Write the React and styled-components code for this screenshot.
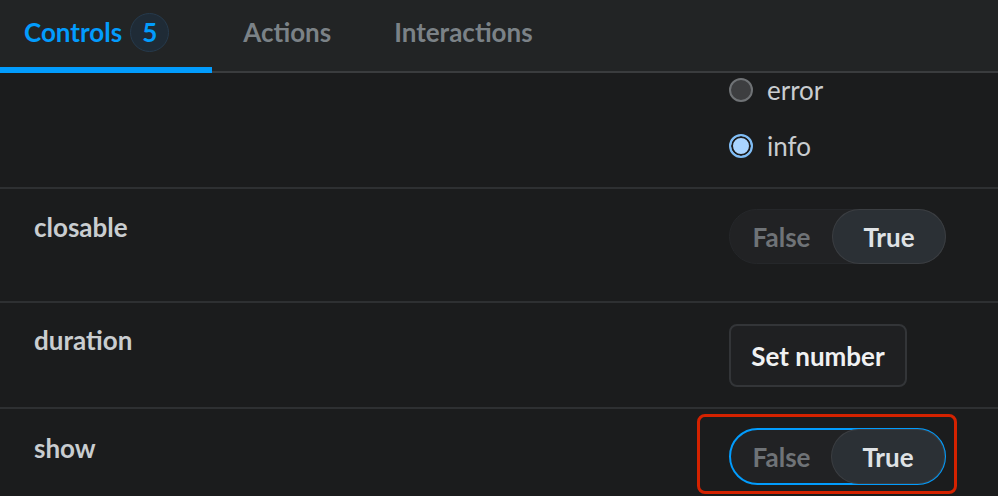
import React from "react";
import styled, { createGlobalStyle } from "styled-components";

const Global = createGlobalStyle`
  html, body { margin: 0; padding: 0; background: #1b1c1d; overflow: hidden; }
  body { font-family: Lato, "Noto Sans", sans-serif; -webkit-font-smoothing: antialiased; }
`;

const FS = "26px";

const Panel = styled.div`
  width: 998px;
  height: 496px;
  display: flex;
  flex-direction: column;
  background: #1b1c1d;
  overflow: hidden;
`;

const TabBar = styled.div`
  height: 73px;
  flex: none;
  display: flex;
  align-items: stretch;
  background: #222425;
  box-shadow: inset 0 -2px 0 #3a3c3e;
`;

const Tab = styled.div`
  display: flex;
  align-items: center;
  gap: 8px;
  padding: 0 ${(p) => p.$pr}px 9px ${(p) => p.$pl}px;
  font-size: ${FS};
  font-weight: 700;
  color: ${(p) => (p.$active ? "#029cfd" : "#7b8287")};
  box-shadow: ${(p) => (p.$active ? "inset 0 -6px 0 #029cfd" : "none")};
`;

const Badge = styled.span`
  width: 37px;
  height: 37px;
  border-radius: 50%;
  display: flex;
  align-items: center;
  justify-content: center;
  background: #1f2b36;
  border: 1px solid #263a4c;
  color: #029cfd;
  font-size: ${FS};
  font-weight: 700;
`;

const Rows = styled.div`
  display: flex;
  flex-direction: column;
`;

const Row = styled.div`
  display: grid;
  grid-template-columns: 695px 1fr;
  height: ${(p) => p.$h}px;
  box-sizing: border-box;
  border-top: ${(p) => (p.$first ? "none" : "2px solid #2e3032")};
  padding: ${(p) => p.$pt}px 0 0 34px;
`;

const Label = styled.div`
  font-size: ${FS};
  font-weight: 700;
  color: #c9cdd0;
  line-height: 30px;
  padding-top: ${(p) => p.$pt}px;
`;

const Control = styled.div`
  display: flex;
  flex-direction: column;
  align-items: flex-start;
  gap: ${(p) => p.$gap || 0}px;
`;

const RadioRow = styled.label`
  display: flex;
  align-items: center;
  gap: 14px;
  height: 34px;
  font-size: ${FS};
  color: #c9cdd0;
`;

const RadioDot = styled.span`
  width: 24px;
  height: 24px;
  box-sizing: border-box;
  border-radius: 50%;
  border: 2px solid ${(p) => (p.$on ? "#7fbdf6" : "#6f7275")};
  background: ${(p) => (p.$on ? "#a9d4ff" : "#3d3e40")};
  box-shadow: ${(p) => (p.$on ? "inset 0 0 0 2px #1b1c1d" : "none")};
`;

const ToggleWrap = styled.div`
  position: relative;
`;

const Toggle = styled.div`
  display: flex;
  align-items: stretch;
  width: 217px;
  height: ${(p) => (p.$focus ? 57 : 55)}px;
  box-sizing: border-box;
  border-radius: 999px;
  background: #212224;
  border: ${(p) => (p.$focus ? "2px solid #029cfd" : "1px solid #25272a")};
`;

const Seg = styled.span`
  flex: ${(p) => (p.$on ? "0 0 112px" : "1")};
  display: flex;
  align-items: center;
  justify-content: center;
  border-radius: 999px;
  font-size: ${FS};
  font-weight: 700;
  color: ${(p) => (p.$on ? "#dfe2e5" : "#6f7377")};
  background: ${(p) => (p.$on ? "#2b3035" : "transparent")};
  box-shadow: ${(p) => (p.$on ? "0 0 0 1px #3b3e42" : "none")};
  padding-top: 1px;
`;

const Button = styled.button`
  width: 178px;
  height: 63px;
  box-sizing: border-box;
  border-radius: 8px;
  border: 2px solid #333538;
  background: #1f2022;
  color: #f0f1f2;
  font-family: inherit;
  font-size: ${FS};
  font-weight: 700;
  padding: 0;
`;

const Highlight = styled.div`
  position: absolute;
  left: -32px;
  right: -11px;
  top: -14px;
  bottom: -9px;
  border: 3px solid #d42200;
  border-radius: 8px;
  pointer-events: none;
`;

function BoolToggle({ focus }) {
  return (
    <Toggle $focus={focus}>
      <Seg>False</Seg>
      <Seg $on>True</Seg>
    </Toggle>
  );
}

export default function App() {
  return (
    <>
      <Global />
      <Panel>
        <TabBar>
          <Tab $active $pl={24} $pr={43}>
            Controls <Badge>5</Badge>
          </Tab>
          <Tab $pl={31} $pr={30}>Actions</Tab>
          <Tab $pl={33} $pr={30}>Interactions</Tab>
        </TabBar>
        <Rows>
          <Row $first $h={114} $pt={0}>
            <Label />
            <Control $gap={22}>
              <RadioRow>
                <RadioDot />
                error
              </RadioRow>
              <RadioRow>
                <RadioDot $on />
                info
              </RadioRow>
            </Control>
          </Row>
          <Row $h={114} $pt={20}>
            <Label $pt={3}>closable</Label>
            <Control>
              <BoolToggle />
            </Control>
          </Row>
          <Row $h={106} $pt={21}>
            <Label $pt={1}>duration</Label>
            <Control>
              <Button>Set number</Button>
            </Control>
          </Row>
          <Row $h={100} $pt={19}>
            <Label $pt={5}>show</Label>
            <Control>
              <ToggleWrap>
                <BoolToggle focus />
                <Highlight />
              </ToggleWrap>
            </Control>
          </Row>
        </Rows>
      </Panel>
    </>
  );
}
